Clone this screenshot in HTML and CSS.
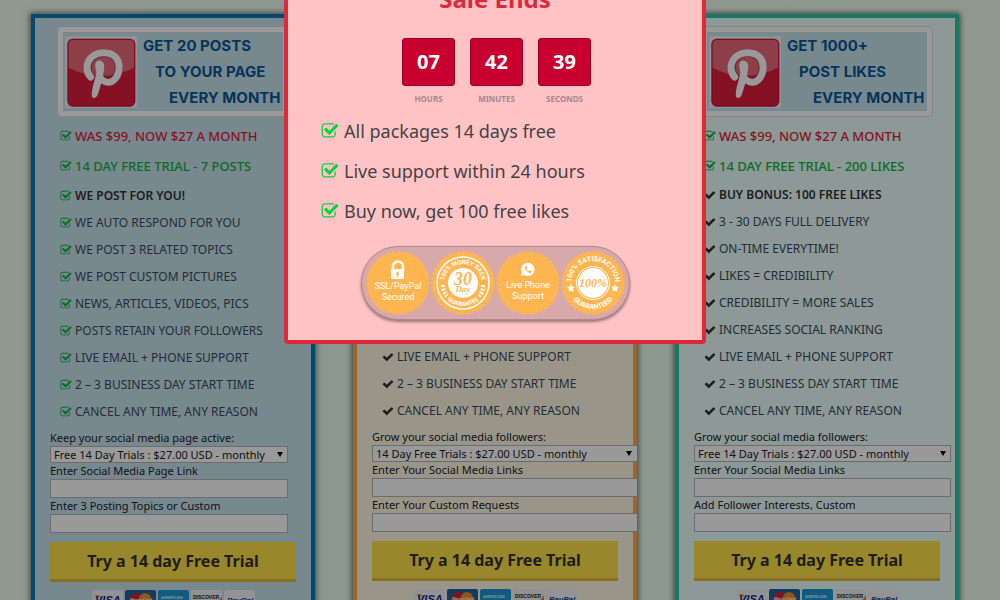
FILE: index.html
```
<!DOCTYPE html>
<html lang="en">
<head>
  <meta charset="UTF-8" />
  <meta name="viewport" content="width=device-width, initial-scale=1" />
  <title>Pinterest Packages</title>
  <link rel="stylesheet" href="styles.css">
</head>
<body>

  <!-- shared icons -->
  <svg class="sprite" aria-hidden="true">
    <symbol id="check-square" viewBox="0 0 1792 1792">
      <path d="M1472 930v318q0 119-84.5 203.5t-203.5 84.5h-832q-119 0-203.5-84.5t-84.5-203.5v-832q0-119 84.5-203.5t203.5-84.5h832q63 0 117 25 15 7 18 23 3 17-9 29l-49 49q-10 10-23 10-3 0-9-2-23-6-45-6h-832q-66 0-113 47t-47 113v832q0 66 47 113t113 47h832q66 0 113-47t47-113v-254q0-13 9-22l64-64q10-10 23-10 6 0 12 3 20 8 20 29zm231-489l-814 814q-24 24-57 24t-57-24l-430-430q-24-24-24-57t24-57l110-110q24-24 57-24t57 24l263 263 647-647q24-24 57-24t57 24l110 110q24 24 24 57t-24 57z"/>
    </symbol>
    <symbol id="check" viewBox="0 0 1792 1792">
      <path d="M1671 566q0 40-28 68l-724 724-136 136q-28 28-68 28t-68-28l-136-136-362-362q-28-28-28-68t28-68l136-136q28-28 68-28t68 28l294 295 656-657q28-28 68-28t68 28l136 136q28 28 28 68z"/>
    </symbol>
    <symbol id="pinterest" viewBox="0 0 216 216">
      <rect width="216" height="216" fill="#fff" opacity=".6"/>
      <rect x="7" y="8" width="204" height="204" rx="16" fill="#d80f32"/>
      <rect x="11" y="12" width="196" height="196" rx="13" fill="#de1f3d"/>
      <path d="M11 95V25q0-13 13-13h170q13 0 13 13v70q-98 50-196 0z" fill="#ea6a78"/>
      <path d="M79 123C64 108 64 80 82 64 102 46 138 47 153 67 168 89 161 124 141 135 129 141 116 138 109 128" fill="none" stroke="#9c1228" stroke-width="24" stroke-linecap="round" opacity=".5"/>
      <path d="M77 123C62 108 62 80 80 63 100 45 138 46 154 66 170 89 162 125 141 136 129 142 114 138 107 127" fill="none" stroke="#fff" stroke-width="21" stroke-linecap="round"/>
      <path d="M91 92C89 78 98 72 106 74 118 77 119 89 117 100L113 128 99 174C95 186 87 189 82 184 77 172 85 148 94 112Z" fill="#fff"/>
    </symbol>
    <symbol id="payments" viewBox="0 0 163 20">
      <g font-family="Liberation Sans, sans-serif" font-weight="bold" font-style="italic">
        <rect width="31" height="20" rx="2" fill="#f2f4f8"/>
        <path d="M2 5h5l3 4z" fill="#f0a030"/>
        <text x="3" y="14" font-size="11" fill="#1a1f80">VISA</text>
        <rect x="33" width="31" height="20" rx="2" fill="#20649a"/>
        <circle cx="44" cy="9" r="6" fill="#d8202c"/>
        <circle cx="53" cy="9" r="6" fill="#f58a30"/>
        <text x="38" y="11" font-size="4" fill="#fff">MasterCard</text>
        <rect x="66" width="31" height="20" rx="2" fill="#1c9ad8"/>
        <text x="69" y="9" font-size="4" font-style="normal" fill="#d4efff">AMERICAN</text>
        <text x="69" y="14" font-size="4" font-style="normal" fill="#d4efff">EXPRESS</text>
        <rect x="99" width="31" height="20" rx="2" fill="#f4f2f2"/>
        <path d="M130 6v14h-22q17-4 22-14z" fill="#f0703c"/>
        <text x="101" y="9" font-size="5" font-style="normal" fill="#222">DISCOVER</text>
        <rect x="132" width="31" height="20" rx="2" fill="#f4f6fa"/>
        <text x="135" y="13" font-size="8" fill="#1c3f80">PayPal</text>
      </g>
    </symbol>
  </svg>

  <main class="packages">

    <section class="package blue">
      <div class="banner">
        <svg class="banner-logo"><use href="#pinterest"/></svg>
        <div class="banner-text">
          <span>GET 20 POSTS</span>
          <span>TO YOUR PAGE</span>
          <span>EVERY MONTH</span>
        </div>
      </div>
      <ul class="features">
        <li class="price"><svg><use href="#check-square"/></svg>WAS $99, NOW $27 A MONTH</li>
        <li class="trial"><svg><use href="#check-square"/></svg>14 DAY FREE TRIAL - 7 POSTS</li>
        <li class="bonus"><svg><use href="#check-square"/></svg>WE POST FOR YOU!</li>
        <li><svg><use href="#check-square"/></svg>WE AUTO RESPOND FOR YOU</li>
        <li><svg><use href="#check-square"/></svg>WE POST 3 RELATED TOPICS</li>
        <li><svg><use href="#check-square"/></svg>WE POST CUSTOM PICTURES</li>
        <li><svg><use href="#check-square"/></svg>NEWS, ARTICLES, VIDEOS, PICS</li>
        <li><svg><use href="#check-square"/></svg>POSTS RETAIN YOUR FOLLOWERS</li>
        <li><svg><use href="#check-square"/></svg>LIVE EMAIL + PHONE SUPPORT</li>
        <li><svg><use href="#check-square"/></svg>2 – 3 BUSINESS DAY START TIME</li>
        <li><svg><use href="#check-square"/></svg>CANCEL ANY TIME, ANY REASON</li>
      </ul>
      <form class="order">
        <label for="plan-1">Keep your social media page active:</label>
        <div class="select-wrap">
          <select id="plan-1"><option>Free 14 Day Trials : $27.00 USD - monthly</option></select>
        </div>
        <label for="link-1">Enter Social Media Page Link</label>
        <input type="text" id="link-1" />
        <label for="custom-1">Enter 3 Posting Topics or Custom</label>
        <input type="text" id="custom-1" />
        <button type="button">Try a 14 day Free Trial</button>
        <svg class="payments"><use href="#payments"/></svg>
      </form>
    </section>

    <section class="package orange">
      <div class="banner">
        <svg class="banner-logo"><use href="#pinterest"/></svg>
        <div class="banner-text">
          <span>GET 200+</span>
          <span>FOLLOWERS</span>
          <span>EVERY MONTH</span>
        </div>
      </div>
      <ul class="features">
        <li class="price"><svg><use href="#check-square"/></svg>WAS $99, NOW $27 A MONTH</li>
        <li class="trial"><svg><use href="#check-square"/></svg>14 DAY FREE TRIAL</li>
        <li class="bonus"><svg><use href="#check"/></svg>BUY BONUS: 100 FREE LIKES</li>
        <li><svg><use href="#check"/></svg>3 - 30 DAYS FULL DELIVERY</li>
        <li><svg><use href="#check"/></svg>ON-TIME EVERYTIME!</li>
        <li><svg><use href="#check"/></svg>FOLLOWERS = CREDIBILITY</li>
        <li><svg><use href="#check"/></svg>CREDIBILITY = MORE SALES</li>
        <li><svg><use href="#check"/></svg>INCREASES SOCIAL RANKING</li>
        <li><svg><use href="#check"/></svg>LIVE EMAIL + PHONE SUPPORT</li>
        <li><svg><use href="#check"/></svg>2 – 3 BUSINESS DAY START TIME</li>
        <li><svg><use href="#check"/></svg>CANCEL ANY TIME, ANY REASON</li>
      </ul>
      <form class="order">
        <label for="plan-2">Grow your social media followers:</label>
        <div class="select-wrap">
          <select id="plan-2"><option>14 Day Free Trials : $27.00 USD - monthly</option></select>
        </div>
        <label for="link-2">Enter Your Social Media Links</label>
        <input type="text" id="link-2" />
        <label for="custom-2">Enter Your Custom Requests</label>
        <input type="text" id="custom-2" />
        <button type="button">Try a 14 day Free Trial</button>
        <svg class="payments"><use href="#payments"/></svg>
      </form>
    </section>

    <section class="package green">
      <div class="banner">
        <svg class="banner-logo"><use href="#pinterest"/></svg>
        <div class="banner-text">
          <span>GET 1000+</span>
          <span>POST LIKES</span>
          <span>EVERY MONTH</span>
        </div>
      </div>
      <ul class="features">
        <li class="price"><svg><use href="#check-square"/></svg>WAS $99, NOW $27 A MONTH</li>
        <li class="trial"><svg><use href="#check-square"/></svg>14 DAY FREE TRIAL - 200 LIKES</li>
        <li class="bonus"><svg><use href="#check"/></svg>BUY BONUS: 100 FREE LIKES</li>
        <li><svg><use href="#check"/></svg>3 - 30 DAYS FULL DELIVERY</li>
        <li><svg><use href="#check"/></svg>ON-TIME EVERYTIME!</li>
        <li><svg><use href="#check"/></svg>LIKES = CREDIBILITY</li>
        <li><svg><use href="#check"/></svg>CREDIBILITY = MORE SALES</li>
        <li><svg><use href="#check"/></svg>INCREASES SOCIAL RANKING</li>
        <li><svg><use href="#check"/></svg>LIVE EMAIL + PHONE SUPPORT</li>
        <li><svg><use href="#check"/></svg>2 – 3 BUSINESS DAY START TIME</li>
        <li><svg><use href="#check"/></svg>CANCEL ANY TIME, ANY REASON</li>
      </ul>
      <form class="order">
        <label for="plan-3">Grow your social media followers:</label>
        <div class="select-wrap">
          <select id="plan-3"><option>Free 14 Day Trials : $27.00 USD - monthly</option></select>
        </div>
        <label for="link-3">Enter Your Social Media Links</label>
        <input type="text" id="link-3" />
        <label for="custom-3">Add Follower Interests, Custom</label>
        <input type="text" id="custom-3" />
        <button type="button">Try a 14 day Free Trial</button>
        <svg class="payments"><use href="#payments"/></svg>
      </form>
    </section>

  </main>

  <div class="overlay">
    <div class="popup" role="dialog" aria-labelledby="popup-title">
      <h2 id="popup-title">Sale Ends</h2>
      <div class="countdown">
        <div class="unit"><b>07</b><span>HOURS</span></div>
        <div class="unit"><b>42</b><span>MINUTES</span></div>
        <div class="unit"><b>39</b><span>SECONDS</span></div>
      </div>
      <ul class="perks">
        <li><svg><use href="#check-square"/></svg>All packages 14 days free</li>
        <li><svg><use href="#check-square"/></svg>Live support within 24 hours</li>
        <li><svg><use href="#check-square"/></svg>Buy now, get 100 free likes</li>
      </ul>
      <div class="badges">
        <svg viewBox="0 0 64 64">
          <circle class="seal" cx="32" cy="32" r="30"/>
          <circle class="seal-edge" cx="32" cy="32" r="30" pathLength="200"/>
          <path d="M27 20v-4.500a5 5 0 0 1 10 0V20" fill="none" stroke="#fff" stroke-width="2.500"/>
          <rect x="25" y="18" width="13" height="10" rx="1" fill="#fff"/>
          <path d="M31.500 21a1.500 1.500 0 0 1 .8 2.700V26h-1.600v-2.300a1.500 1.500 0 0 1 .8-2.700z" fill="#ffb650"/>
          <text x="32" y="38" font-size="9">SSL/PayPal</text>
          <text x="32" y="49" font-size="9">Secured</text>
        </svg>
        <svg viewBox="0 0 64 64">
          <circle class="seal" cx="32" cy="32" r="30"/>
          <circle class="seal-edge" cx="32" cy="32" r="30" pathLength="200"/>
          <circle cx="32" cy="32" r="26" fill="none" stroke="#fff" stroke-width="1.500"/>
          <circle cx="32" cy="32" r="15" fill="#fff"/>
          <path id="arc-top" d="M13 32a19 19 0 0 1 38 0" fill="none"/>
          <path id="arc-bottom" d="M9 32a23 23 0 0 0 46 0" fill="none"/>
          <text font-size="6" font-weight="bold"><textPath href="#arc-top" startOffset="50%">100% MONEY BACK</textPath></text>
          <text font-size="6" font-weight="bold"><textPath href="#arc-bottom" startOffset="50%">GUARANTEE</textPath></text>
          <path d="M12 34q0 7 4 11M52 34q0 7-4 11" fill="none" stroke="#fff" stroke-width="4" stroke-dasharray="2 1.500"/>
          <text class="script" x="32" y="34" font-size="18">30</text>
          <text class="script" x="32" y="41" font-size="9">Day</text>
        </svg>
        <svg viewBox="0 0 64 64">
          <circle class="seal" cx="32" cy="32" r="30"/>
          <circle class="seal-edge" cx="32" cy="32" r="30" pathLength="200"/>
          <path d="M25 25l1-3.500a6.500 6.500 0 1 1 2.500 2.500z" fill="#fff"/>
          <circle cx="32" cy="18.500" r="6.500" fill="#fff"/>
          <path d="M29.500 15.200q-1 .8-.7 2.100 1.200 3.500 4.700 4.700 1.400.3 2.100-.8l.1-1-2-1-1 1q-1.600-.7-2.300-2.300l.8-1-.8-1.800z" fill="#ffb650"/>
          <text x="32" y="37" font-size="9">Live Phone</text>
          <text x="32" y="48" font-size="9">Support</text>
        </svg>
        <svg viewBox="0 0 64 64">
          <circle class="seal" cx="32" cy="32" r="30"/>
          <circle class="seal-edge" cx="32" cy="32" r="30" pathLength="200"/>
          <circle cx="32" cy="32" r="15" fill="#fff"/>
          <circle cx="32" cy="32" r="16.500" fill="none" stroke="#fff" stroke-width="1"/>
          <path id="arc-top-wide" d="M10 32a22 22 0 0 1 44 0" fill="none"/>
          <path id="arc-bottom-wide" d="M6 32a26 26 0 0 0 52 0" fill="none"/>
          <text font-size="7" font-weight="bold"><textPath href="#arc-top-wide" startOffset="50%">100% SATISFACTION</textPath></text>
          <text font-size="7" font-weight="bold"><textPath href="#arc-bottom-wide" startOffset="50%">GUARANTEED</textPath></text>
          <path d="M10 33l1.200 2.500 2.800.4-2 2 .5 2.800-2.500-1.300-2.500 1.300.5-2.800-2-2 2.800-.4zM54 33l1.200 2.500 2.800.4-2 2 .5 2.800-2.500-1.300-2.500 1.300.5-2.800-2-2 2.800-.4z" fill="#fff"/>
          <text class="script" x="32" y="36" font-size="12">100%</text>
        </svg>
      </div>
    </div>
  </div>

</body>
</html>
```
FILE: styles.css
```
* {
  box-sizing: border-box;
}

body {
  margin: 0;
  height: 100vh;
  overflow: hidden;
  background: linear-gradient(to right, #effff0, #e9fff2 50%, #effff0);
  font-family: "Noto Sans", "Open Sans", sans-serif;
  color: #333;
}

ul {
  list-style: none;
  margin: 0;
  padding: 0;
}

.sprite {
  position: absolute;
  width: 0;
  height: 0;
}

/* packages */

.packages {
  display: grid;
  grid-template-columns: repeat(3, minmax(0, 1fr));
  gap: 38px;
  padding: 14px 41px 30px 31px;
}

.package {
  border: 4px solid;
  padding: 9px 15px 20px;
  box-shadow: 0 0 6px 1px rgba(0, 0, 0, 0.6);
}

.blue {
  border-color: #007bb5;
  background: #c8e3ef;
}

.orange {
  border-color: #ffa850;
  background: #fffae5;
}

.green {
  border-color: #28c8a5;
  background: #eafffb;
}

.banner {
  display: flex;
  align-items: center;
  max-width: 230px;
  height: 89px;
  margin: 0 auto 5px;
  padding: 0 2px;
  border: 5px solid #fff;
  border-radius: 4px;
  background: #c8e3ef;
  box-shadow: 0 0 0 1px #ddd;
}

.banner-logo {
  flex: none;
  width: 72px;
  height: 72px;
}

.banner-text {
  display: flex;
  flex-direction: column;
  padding-left: 6px;
  font: bold 15px/26px Inter, sans-serif;
  color: #0a5896;
  white-space: nowrap;
}

.banner-text span:nth-child(2) {
  padding-left: 12px;
}

.banner-text span:nth-child(3) {
  padding-left: 26px;
}

.features {
  padding-left: 10px;
}

.features li {
  display: flex;
  align-items: center;
  gap: 3px;
  height: 27px;
  font-size: 12px;
  white-space: nowrap;
  color: #3c4c5c;
}

.features svg {
  width: 12px;
  height: 12px;
  fill: #333;
}

.features .price,
.features .trial {
  height: 30px;
  font-size: 13px;
  font-weight: 500;
}

.features .price {
  color: #e0243c;
}

.features .trial {
  color: #14b43c;
}

.features .bonus {
  font-weight: 600;
  color: #333;
}

.blue .bonus {
  margin-top: 1px;
}

.blue .features svg,
.price svg,
.trial svg {
  fill: #0fb83e;
}

/* order form */

.order {
  display: flex;
  flex-direction: column;
  align-items: flex-start;
  padding-top: 5px;
  font-size: 11px;
}

.order label {
  line-height: 16px;
  color: #222;
}

.select-wrap {
  position: relative;
  width: 238px;
}

.select-wrap::after {
  content: "";
  position: absolute;
  right: 5px;
  top: 6px;
  border: 3px solid transparent;
  border-top: 5px solid #000;
  border-bottom: 0;
  pointer-events: none;
}

.order select,
.order input {
  display: block;
  width: 238px;
  border: 1px solid #b4b4b4;
  border-radius: 0;
  background: #fff;
  font: inherit;
  color: #222;
}

.order select {
  appearance: none;
  width: 100%;
  height: 17px;
  padding: 0 3px;
  line-height: 15px;
}

.order input {
  height: 19px;
}

.orange .select-wrap,
.orange input {
  width: 265px;
}

.orange select,
.orange input {
  border-right: 0;
}

.green .select-wrap,
.green input {
  width: 257px;
}

.order button {
  width: 100%;
  height: 40px;
  margin-top: 9px;
  border: 0;
  border-bottom: 3px solid #e0bd38;
  background: #ffe24a;
  font: bold 16px "Noto Sans", "Open Sans", sans-serif;
  color: #333;
  cursor: pointer;
}

.payments {
  align-self: center;
  width: 163px;
  height: 20px;
  margin-top: 8px;
}

/* popup */

.overlay {
  position: fixed;
  inset: 0;
  display: flex;
  align-items: flex-start;
  justify-content: center;
  padding-right: 10px;
  background: rgba(0, 0, 0, 0.4);
}

.popup {
  width: 422px;
  margin-top: -40px;
  padding: 19px 33px 20px;
  border: 4px solid #dc2a3a;
  border-radius: 4px;
  background: #ffc3c6;
}

.popup h2 {
  margin: 0 0 23px;
  font-size: 24px;
  line-height: 32px;
  text-align: center;
  color: #dc2a3a;
}

.countdown {
  display: flex;
  justify-content: center;
  gap: 15px;
  padding-left: 3px;
}

.unit {
  display: flex;
  flex-direction: column;
  align-items: center;
  gap: 8px;
  width: 53px;
}

.unit b {
  width: 100%;
  border: 1px solid #a0002a;
  border-radius: 3px;
  background: #c80030;
  font-size: 20px;
  line-height: 46px;
  text-align: center;
  color: #fff;
}

.unit span {
  font-size: 8px;
  font-weight: bold;
  line-height: 10px;
  color: #aa868a;
}

.perks {
  margin-top: 7px;
}

.perks li {
  display: flex;
  align-items: center;
  gap: 5px;
  height: 40px;
  font-size: 18px;
  color: #444;
}

.perks svg {
  width: 18px;
  height: 18px;
  fill: #0fd044;
}

.badges {
  display: flex;
  justify-content: space-between;
  width: 269px;
  margin: 15px auto 0;
  padding: 4px;
  border: 1px solid #b08a8e;
  border-radius: 38px;
  background: #d8a9aa;
  box-shadow: 0 2px 3px rgba(0, 0, 0, 0.4);
}

.badges svg {
  width: 64px;
  height: 64px;
  font-family: Roboto, sans-serif;
  text-anchor: middle;
  fill: #fff;
}

.badges .seal {
  fill: #ffb650;
}

.badges .seal-edge {
  fill: none;
  stroke: #ffb650;
  stroke-width: 4;
  stroke-linecap: round;
  stroke-dasharray: 0 5;
}

.badges .script {
  font-family: "Liberation Serif", serif;
  font-weight: bold;
  font-style: italic;
  fill: #ffb650;
}
```
